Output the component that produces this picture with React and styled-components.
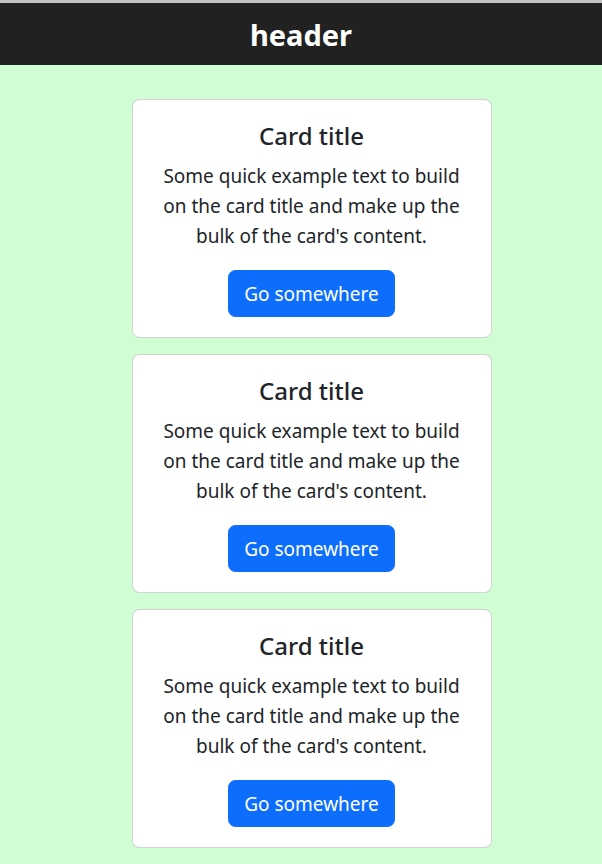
import React from 'react'
import styled, { createGlobalStyle } from 'styled-components'

const GlobalStyle = createGlobalStyle`
    html{
        font-size: 20px;
    }
    body{
        margin: 0;
        background-color: #d1fdd4;
        font-family: "Noto Sans", "Open Sans", sans-serif;
        color: #212529;
    }
`

const Header = styled.header`
    height: 62px;
    border-top: 3px solid #c3c3c8;
    background-color: #212121;
    display: flex;
    align-items: center;
    justify-content: center;
`

const HeaderTitle = styled.h1`
    margin: 0;
    color: #fff;
    font-size: 29px;
    font-weight: 700;
`

const CardList = styled.main`
    display: flex;
    flex-direction: column;
    align-items: center;
    gap: 16px;
    padding: 34px 0 16px 21px;
`

const Card = styled.div`
    width: 18rem;
    box-sizing: border-box;
    background-color: #fff;
    border: 1px solid rgba(0,0,0,0.175);
    border-radius: 0.375rem;
    padding: 1rem;
    text-align: center;
`

const CardTitle = styled.h5`
    margin: 1px 0 0.5rem;
    font-size: 24px;
    font-weight: 500;
    line-height: 30px;
`

const CardText = styled.p`
    margin: 0 0 19px;
    font-size: 19px;
    line-height: 30px;
`

const Button = styled.a`
    display: inline-block;
    padding: 0.375rem 0.75rem;
    font-size: 19px;
    line-height: 30px;
    color: #fff;
    background-color: #0d6efd;
    border: 1px solid #0d6efd;
    border-radius: 0.375rem;
    text-decoration: none;
    cursor: pointer;
`

const CardItem = ({title, text, action}) =>{
    return(
        <Card>
            <CardTitle>{title}</CardTitle>
            <CardText>{text}</CardText>
            <Button href="#">{action}</Button>
        </Card>
    )
}

const cards = [1, 2, 3]

export default function App(){
    return(
        <>
            <GlobalStyle />
            <Header>
                <HeaderTitle>header</HeaderTitle>
            </Header>
            <CardList>
                {cards.map((id)=>(
                    <CardItem
                        key={id}
                        title="Card title"
                        text="Some quick example text to build on the card title and make up the bulk of the card's content."
                        action="Go somewhere"
                    />
                ))}
            </CardList>
        </>
    )
}
